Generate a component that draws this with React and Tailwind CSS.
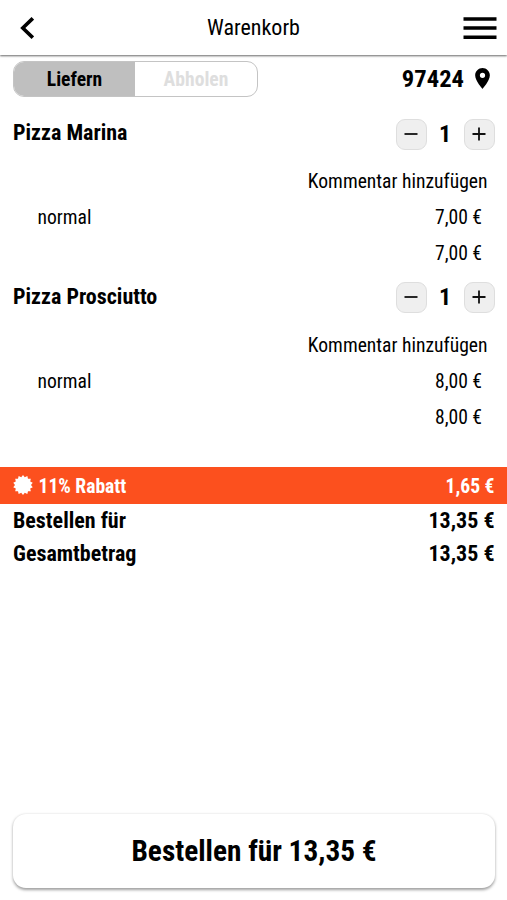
import React, { useState } from 'react';

const initialItems = [
    { id: 1, name: 'Pizza Marina', variant: 'normal', price: 7, qty: 1 },
    { id: 2, name: 'Pizza Prosciutto', variant: 'normal', price: 8, qty: 1 },
];

const formatPrice = (value) => `${value.toFixed(2).replace('.', ',')} €`;

const QtyButton = ({ label, onClick, children }) => (
    <button type="button" aria-label={label} onClick={onClick} className="flex h-[31px] w-[31px] items-center justify-center rounded-[9px] border border-[#dedede] bg-[#efefef]">
        <svg width="15" height="15" viewBox="0 0 15 15" stroke="#111" strokeWidth="1.8" fill="none">
            {children}
        </svg>
    </button>
);

const CartItem = ({ item, onChange }) => (
    <div className="h-[163.5px]">
        <div className="flex h-[55px] items-start justify-between pl-[13px] pr-[12.5px]">
            <h2 className="mt-[11px] text-[22px] leading-7 font-bold">{item.name}</h2>
            <div className="mt-[10.5px] flex items-center">
                <QtyButton label="weniger" onClick={() => onChange(item.id, -1)}>
                    <path d="M0.5 7h13" />
                </QtyButton>
                <span className="w-[37px] text-center text-[24px] leading-[31px] font-bold">{item.qty}</span>
                <QtyButton label="mehr" onClick={() => onChange(item.id, 1)}>
                    <path d="M0.5 7h13M7 0.5v13" />
                </QtyButton>
            </div>
        </div>
        <div className="flex h-9 items-center justify-end pt-[2px] pr-[19.5px] text-[19.6px]">
            <button type="button">Kommentar hinzufügen</button>
        </div>
        <div className="flex h-9 items-center justify-between pt-[2px] pl-[37.5px] pr-[25px] text-[19.6px]">
            <span>{item.variant}</span>
            <span>{formatPrice(item.price)}</span>
        </div>
        <div className="flex h-9 items-center justify-end pt-[2px] pr-[25px] text-[19.6px]">
            <span>{formatPrice(item.price * item.qty)}</span>
        </div>
    </div>
);

// seal with 14 pointed teeth
const sealPoints = Array.from({ length: 28 }, (_, i) => {
    const r = i % 2 ? 8 : 10;
    const a = (i * Math.PI) / 14;
    return `${(10 + r * Math.sin(a)).toFixed(2)},${(10 - r * Math.cos(a)).toFixed(2)}`;
}).join(' ');

const App = () => {
    const [items, setItems] = useState(initialItems);
    const [delivery, setDelivery] = useState(true);

    const changeQty = (id, diff) => {
        setItems(items.map((item) => item.id === id ? { ...item, qty: Math.max(1, item.qty + diff) } : item));
    };

    const sum = items.reduce((acc, item) => acc + item.price * item.qty, 0);
    const discount = sum * 0.11;
    const total = formatPrice(sum - discount);

    return (
        <div className="flex h-screen flex-col overflow-hidden bg-white font-['Roboto_Condensed','Roboto',sans-serif] font-stretch-condensed text-black">
            <header className="grid h-[55px] shrink-0 grid-cols-[1fr_auto_1fr] items-center px-[10px] shadow-[0_1px_2px_rgba(0,0,0,0.6)]">
                <button type="button" aria-label="zurück" className="justify-self-start pl-[10px]">
                    <svg width="14" height="22" viewBox="0 0 14 22" fill="none" stroke="#000" strokeWidth="3.6">
                        <path d="M12.8 1.3L2.8 11l10 9.7" />
                    </svg>
                </button>
                <h1 className="text-[22px]">Warenkorb</h1>
                <button type="button" aria-label="Menü" className="justify-self-end">
                    <svg width="34" height="24" viewBox="0 0 34 24" stroke="#000" strokeWidth="3.6">
                        <path d="M0.5 3h33M0.5 12h33M0.5 21.3h33" />
                    </svg>
                </button>
            </header>

            <div className="flex h-[53px] shrink-0 items-start justify-between pl-[13px] pr-[17px] pt-[6px]">
                <div className="flex h-9 w-[245px] overflow-hidden rounded-[11px] border border-[#c4c4c4] text-[19.6px] font-bold">
                    <button type="button" onClick={() => setDelivery(true)} className={`w-[121px] pt-[2px] ${delivery ? 'bg-[#bfbfbf]' : 'text-[#dedede]'}`}>Liefern</button>
                    <button type="button" onClick={() => setDelivery(false)} className={`flex-1 pt-[2px] ${delivery ? 'text-[#dedede]' : 'bg-[#bfbfbf]'}`}>Abholen</button>
                </div>
                <div className="flex h-9 items-center gap-[11px] text-[24.6px] font-bold">
                    <span>97424</span>
                    <svg width="15" height="21" viewBox="5 2 14 20" className="mb-[2px]">
                        <path d="M12 2C8.13 2 5 5.13 5 9c0 5.25 7 13 7 13s7-7.75 7-13c0-3.87-3.13-7-7-7zm0 9.5a2.5 2.5 0 1 1 0-5 2.5 2.5 0 0 1 0 5z" />
                    </svg>
                </div>
            </div>

            {items.map((item) => (
                <CartItem key={item.id} item={item} onChange={changeQty} />
            ))}

            <div className="mt-8 flex h-[37px] shrink-0 items-center justify-between bg-[#fc501e] px-[12.5px] text-[19.6px] font-bold text-white">
                <div className="flex items-center gap-[6px]">
                    <svg width="20" height="20" viewBox="0 0 20 20" fill="#fff">
                        <polygon points={sealPoints} />
                    </svg>
                    <span className="pt-[2px]">11% Rabatt</span>
                </div>
                <span className="pt-[2px]">{formatPrice(discount)}</span>
            </div>
            <div className="flex flex-col text-[22px] font-bold">
                <div className="flex h-[33px] items-center justify-between pl-[13px] pr-[12.5px]">
                    <span>Bestellen für</span>
                    <span>{total}</span>
                </div>
                <div className="flex h-[33px] items-center justify-between pl-[13px] pr-[12.5px]">
                    <span>Gesamtbetrag</span>
                    <span>{total}</span>
                </div>
            </div>

            <button type="button" className="mx-3 mt-auto mb-3 ml-[13px] h-[74px] shrink-0 rounded-[13px] bg-white pt-[2px] text-[29.3px] font-bold shadow-[0_1.5px_3px_rgba(0,0,0,0.38)]">
                Bestellen für {total}
            </button>
        </div>
    );
};

export default App;
